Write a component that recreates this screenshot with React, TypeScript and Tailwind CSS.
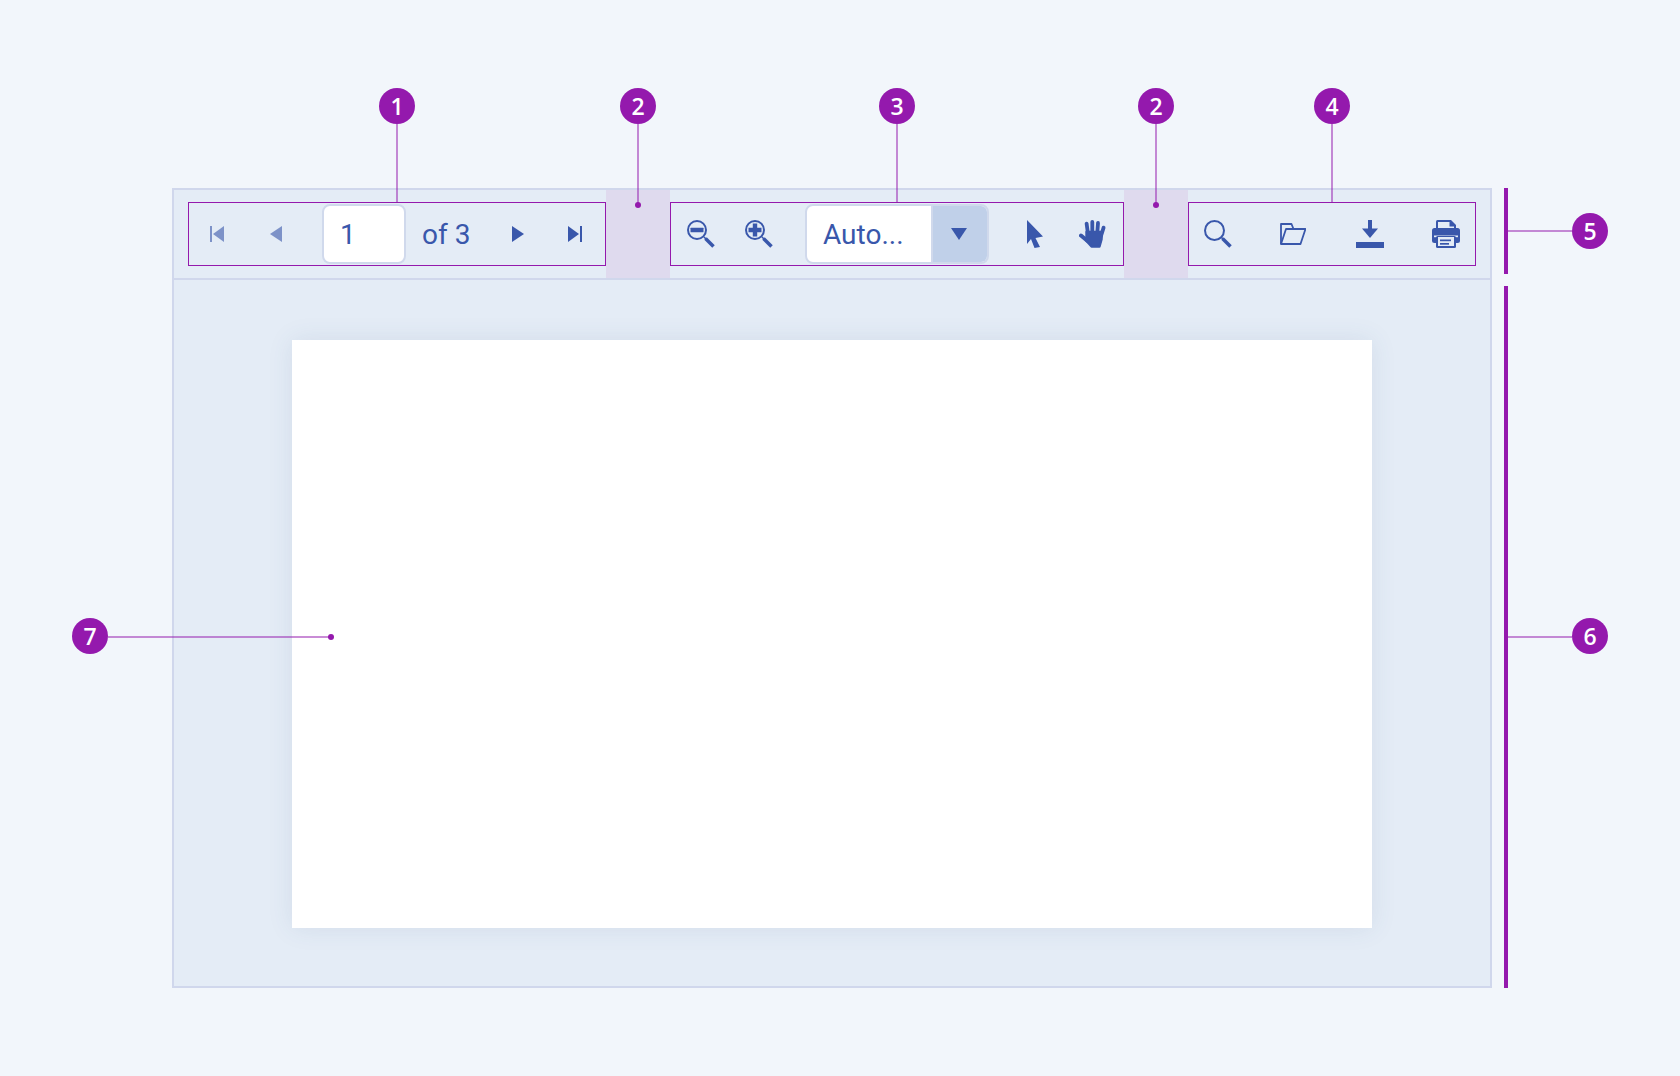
import React from "react";

const Badge = ({ n, pos }: { n: number; pos: string }) => (
  <div className={`absolute w-[36px] h-[36px] rounded-full bg-[#9419ad] text-white flex items-center justify-center font-['Open_Sans',sans-serif] font-semibold text-[23px] leading-none ${pos}`}>
    {n}
  </div>
);

const FirstIcon = () => (
  <svg width="14" height="16" viewBox="0 0 14 16" className="shrink-0 ml-[21px] opacity-60" fill="#3957ab">
    <rect width="2" height="16" />
    <path d="M3 8 14 0v16z" />
  </svg>
);
const PrevIcon = () => (
  <svg width="12" height="16" viewBox="0 0 12 16" className="shrink-0 ml-[46px] opacity-60" fill="#3957ab">
    <path d="M12 0v16L0 8z" />
  </svg>
);
const NextIcon = () => (
  <svg width="12" height="16" viewBox="0 0 12 16" className="shrink-0 ml-[42px]" fill="#3957ab">
    <path d="M0 0v16l12-8z" />
  </svg>
);
const LastIcon = () => (
  <svg width="14" height="16" viewBox="0 0 14 16" className="shrink-0 ml-[44px]" fill="#3957ab">
    <rect x="12" width="2" height="16" />
    <path d="M0 0v16l11-8z" />
  </svg>
);
const ZoomOutIcon = () => (
  <svg width="28" height="28" viewBox="0 0 28 28" className="shrink-0 ml-[16px]" fill="none">
    <circle cx="10" cy="10" r="9" stroke="#3957ab" strokeWidth="2" />
    <rect x="3.500" y="7.800" width="13" height="4.400" rx="0.5" fill="#3957ab" />
    <path d="M17 17l2 2" stroke="#3957ab" strokeWidth="1.600" />
    <path d="M18.500 18.500l8 8" stroke="#3957ab" strokeWidth="3.600" />
  </svg>
);
const ZoomInIcon = () => (
  <svg width="28" height="28" viewBox="0 0 28 28" className="shrink-0 ml-[30px]" fill="none">
    <circle cx="10" cy="10" r="9" stroke="#3957ab" strokeWidth="2" />
    <path d="M3.500 7.800h4.300V3.500h4.400v4.300h4.300v4.400h-4.300v4.300H7.800v-4.300H3.500z" fill="#3957ab" />
    <path d="M17 17l2 2" stroke="#3957ab" strokeWidth="1.600" />
    <path d="M18.500 18.500l8 8" stroke="#3957ab" strokeWidth="3.600" />
  </svg>
);
const CursorIcon = () => (
  <svg width="16" height="28" viewBox="0 0 16 28" className="shrink-0 ml-[38px]" fill="#3957ab">
    <path d="M0 0l16 16.500-7.500 1.500L13 27l-5.500 1L4 19l-4 5z" />
  </svg>
);
const HandIcon = () => (
  <svg width="27" height="28" viewBox="0 0 27 28" className="shrink-0 ml-[36px]" fill="none" stroke="#3957ab" strokeLinecap="round">
    <path d="M7.600 3.600 9 14M13.300 2V13M19 3 18.200 14M24.600 7.600 22 16" strokeWidth="3.800" />
    <path d="M2 15.500 8 20.500" strokeWidth="4" />
    <path d="M7.500 12h15.500l-.5 7.500-2 7H12.500L7.500 21z" fill="#3957ab" strokeWidth="2.400" strokeLinejoin="round" />
  </svg>
);
const SearchIcon = () => (
  <svg width="28" height="28" viewBox="0 0 28 28" className="shrink-0 ml-[15px]" fill="none">
    <circle cx="10.500" cy="10.500" r="9.500" stroke="#3957ab" strokeWidth="2" />
    <path d="M17.500 17.500l2 2" stroke="#3957ab" strokeWidth="1.600" />
    <path d="M18.500 18.500l8 8" stroke="#3957ab" strokeWidth="3.600" />
  </svg>
);
const FolderIcon = () => (
  <svg width="26" height="22" viewBox="0 0 26 22" className="shrink-0 ml-[48px]" fill="none" stroke="#3957ab" strokeWidth="1.800" strokeLinejoin="round">
    <path d="M1 21V1h10.500l2 5" />
    <path d="M6 6h19.500L20.500 21H1z" />
  </svg>
);
const DownloadIcon = () => (
  <svg width="28" height="28" viewBox="0 0 28 28" className="shrink-0 ml-[50px]" fill="#3957ab">
    <rect x="12" width="4" height="9" />
    <path d="M6 8.500h16L14 18z" />
    <rect y="22" width="28" height="6" />
  </svg>
);
const PrintIcon = () => (
  <svg width="28" height="28" viewBox="0 0 28 28" className="shrink-0 ml-[48px]">
    <path d="M4 9V1.500Q4 0 5.500 0H19l5 5v4z" fill="#3957ab" />
    <path d="M6 9V2h11.500v4.500H22V9z" fill="#e4ecf6" />
    <rect y="8" width="28" height="15" rx="2.500" fill="#3957ab" />
    <rect x="2" y="15.500" width="24" height="1.700" fill="#e4ecf6" />
    <rect x="4" y="16" width="20" height="12" rx="1.500" fill="#3957ab" />
    <rect x="6" y="17" width="16" height="9" fill="#e4ecf6" />
    <rect x="8" y="19.500" width="11" height="1.700" fill="#3957ab" />
    <rect x="8" y="23" width="9" height="1.700" fill="#3957ab" />
  </svg>
);

export default function App() {
  return (
    <div className="relative w-[1680px] h-[1076px] overflow-hidden bg-[#f2f6fb] pt-[188px] pl-[172px] font-['Roboto',sans-serif] text-[#3957ab]">
      <div className="flex items-stretch">
        <div className="w-[1320px] h-[800px] flex flex-col border-2 border-[#d0d7ec] bg-[#e4ecf6]">
          <div className="h-[90px] shrink-0 flex items-stretch border-b-2 border-[#d0d7ec] pl-[14px]">
            <div className="my-[12px] w-[418px] h-[64px] border border-[#9419ad] flex items-center">
              <FirstIcon />
              <PrevIcon />
              <div className="ml-[40px] w-[84px] h-[60px] shrink-0 bg-white border-2 border-[#d0d9ec] rounded-[8px] flex items-center pl-[16px] pt-[2px] text-[28px] leading-none">1</div>
              <div className="ml-[16px] w-[48px] shrink-0 pt-[2px] text-[28px] leading-none whitespace-nowrap">of 3</div>
              <NextIcon />
              <LastIcon />
            </div>
            <div className="w-[64px] bg-[#dfdaee]" />
            <div className="my-[12px] w-[454px] h-[64px] border border-[#9419ad] flex items-center">
              <ZoomOutIcon />
              <ZoomInIcon />
              <div className="ml-[32px] w-[184px] h-[60px] shrink-0 bg-white border-2 border-[#d0d9ec] rounded-[8px] overflow-hidden flex">
                <div className="w-[124px] flex items-center pl-[16px] pt-[2px] text-[28px] leading-none whitespace-nowrap">Auto...</div>
                <div className="flex-1 bg-[#c0d0e9] border-l-2 border-[#d0d9ec] flex items-center justify-center pr-[2px]">
                  <svg width="16" height="12" viewBox="0 0 16 12" fill="#3957ab">
                    <path d="M0 0h16L8 12z" />
                  </svg>
                </div>
              </div>
              <CursorIcon />
              <HandIcon />
            </div>
            <div className="w-[64px] bg-[#dfdaee]" />
            <div className="my-[12px] w-[288px] h-[64px] border border-[#9419ad] flex items-center">
              <SearchIcon />
              <FolderIcon />
              <DownloadIcon />
              <PrintIcon />
            </div>
          </div>
          <div className="flex-1 pt-[60px] px-[118px]">
            <div className="h-[588px] bg-white shadow-[0_0_24px_rgba(60,90,130,0.1)]" />
          </div>
        </div>
        <div className="ml-[12px] w-[4px] flex flex-col gap-[12px]">
          <div className="h-[86px] bg-[#9419ad]" />
          <div className="flex-1 bg-[#9419ad]" />
        </div>
      </div>

      <div className="absolute left-[396px] top-[124px] w-[2px] h-[78px] bg-[#9419ad]/50" />
      <div className="absolute left-[637px] top-[124px] w-[2px] h-[80px] bg-[#9419ad]/50" />
      <div className="absolute left-[635px] top-[202px] w-[6px] h-[6px] rounded-full bg-[#9419ad]" />
      <div className="absolute left-[896px] top-[124px] w-[2px] h-[78px] bg-[#9419ad]/50" />
      <div className="absolute left-[1155px] top-[124px] w-[2px] h-[80px] bg-[#9419ad]/50" />
      <div className="absolute left-[1153px] top-[202px] w-[6px] h-[6px] rounded-full bg-[#9419ad]" />
      <div className="absolute left-[1331px] top-[124px] w-[2px] h-[78px] bg-[#9419ad]/50" />
      <div className="absolute left-[1508px] top-[230px] w-[64px] h-[2px] bg-[#9419ad]/50" />
      <div className="absolute left-[1508px] top-[636px] w-[64px] h-[2px] bg-[#9419ad]/50" />
      <div className="absolute left-[108px] top-[636px] w-[222px] h-[2px] bg-[#9419ad]/50" />
      <div className="absolute left-[328px] top-[634px] w-[6px] h-[6px] rounded-full bg-[#9419ad]" />

      <Badge n={1} pos="left-[379px] top-[88px]" />
      <Badge n={2} pos="left-[620px] top-[88px]" />
      <Badge n={3} pos="left-[879px] top-[88px]" />
      <Badge n={2} pos="left-[1138px] top-[88px]" />
      <Badge n={4} pos="left-[1314px] top-[88px]" />
      <Badge n={5} pos="left-[1572px] top-[213px]" />
      <Badge n={6} pos="left-[1572px] top-[618px]" />
      <Badge n={7} pos="left-[72px] top-[618px]" />
    </div>
  );
}
